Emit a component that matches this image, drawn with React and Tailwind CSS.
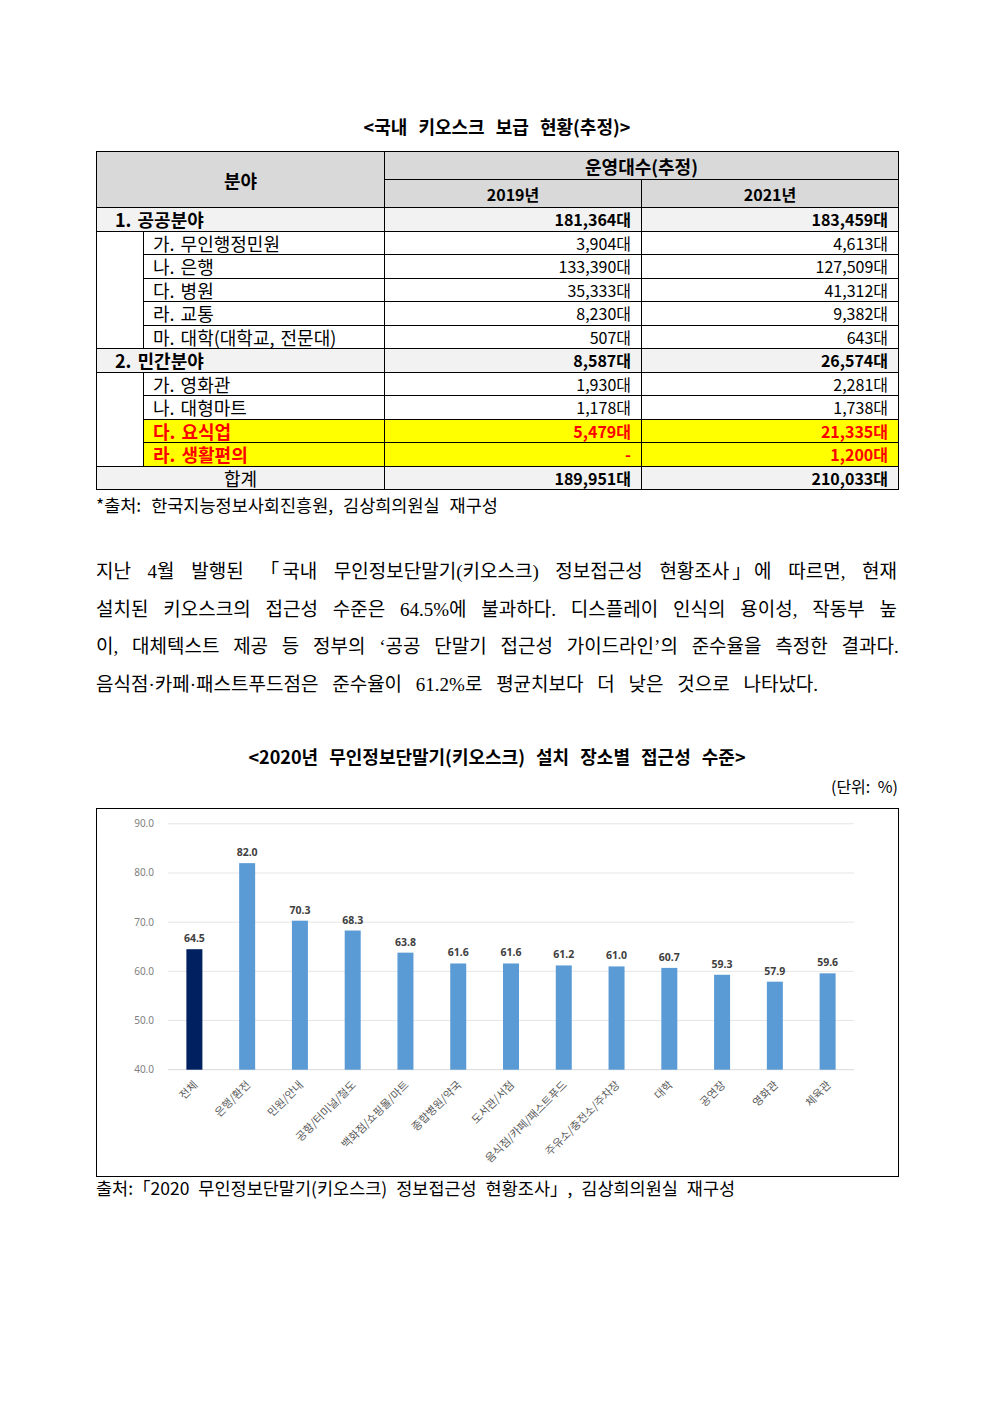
const sans = "font-['Noto_Sans_CJK_KR','Noto_Sans',sans-serif]";

const publicRows = [
  ["가. 무인행정민원", "3,904대", "4,613대"],
  ["나. 은행", "133,390대", "127,509대"],
  ["다. 병원", "35,333대", "41,312대"],
  ["라. 교통", "8,230대", "9,382대"],
  ["마. 대학(대학교, 전문대)", "507대", "643대"],
];

const privateRows = [
  ["가. 영화관", "1,930대", "2,281대"],
  ["나. 대형마트", "1,178대", "1,738대"],
  ["다. 요식업", "5,479대", "21,335대", true],
  ["라. 생활편의", "-", "1,200대", true],
];

const bars = [
  ["전체", 64.5, true],
  ["은행/환전", 82.0],
  ["민원/안내", 70.3],
  ["공항/터미널/철도", 68.3],
  ["백화점/쇼핑몰/마트", 63.8],
  ["종합병원/약국", 61.6],
  ["도서관/서점", 61.6],
  ["음식점/카페/패스트푸드", 61.2],
  ["주유소/충전소/주차장", 61.0],
  ["대학", 60.7],
  ["공연장", 59.3],
  ["영화관", 57.9],
  ["체육관", 59.6],
];

const td = "border border-black p-0 h-[23.5px] leading-none";

const SubRows = ({ rows }) =>
  rows.map(([label, a, b, hl], i) => (
    <tr key={label}>
      {i === 0 && <td rowSpan={rows.length} className="border border-black p-0" />}
      <td
        className={`${td} pl-[9px] text-[18px] [word-spacing:2px] ${hl ? "bg-[#ffff00] text-[#ff0000] font-bold" : ""}`}
      >
        {label}
      </td>
      <td
        className={`${td} pr-[10px] text-right text-[16px] ${hl ? "bg-[#ffff00] text-[#ff0000] font-bold" : ""}`}
      >
        {a}
      </td>
      <td
        className={`${td} pr-[10px] text-right text-[16px] ${hl ? "bg-[#ffff00] text-[#ff0000] font-bold" : ""}`}
      >
        {b}
      </td>
    </tr>
  ));

const GroupRow = ({ label, a, b, center }) => (
  <tr className="bg-[#f2f2f2]">
    <td
      colSpan={2}
      className={`${td} text-[18px] [word-spacing:2px] ${center ? "text-center" : "pl-[18px] font-bold"}`}
    >
      {label}
    </td>
    <td className={`${td} pr-[10px] text-right text-[16px] font-bold`}>{a}</td>
    <td className={`${td} pr-[10px] text-right text-[16px] font-bold`}>{b}</td>
  </tr>
);

const Chart = () => {
  const x0 = 71;
  const step = 52.77;
  const axisY = 260.7;
  const unit = 4.918;
  const yOf = (v) => axisY - (v - 40) * unit;
  const ticks = [90, 80, 70, 60, 50, 40];

  return (
    <svg width="801" height="367" className="block">
      {ticks.map((t) => (
        <g key={t}>
          <line
            x1={x0}
            x2={757}
            y1={yOf(t)}
            y2={yOf(t)}
            stroke={t === 40 ? "#d9d9d9" : "#e6e6e6"}
            strokeWidth="1"
          />
          <text
            x="57"
            y={yOf(t) + 3.5}
            textAnchor="end"
            fontSize="10"
            fill="#7f7f7f"
            fontFamily="'Noto Sans', sans-serif"
          >
            {t.toFixed(1)}
          </text>
        </g>
      ))}
      {bars.map(([name, v, dark], i) => {
        const cx = x0 + step * (i + 0.5);
        const top = yOf(v);
        return (
          <g key={name}>
            <rect
              x={cx - 8}
              y={top}
              width="16"
              height={axisY - top}
              fill={dark ? "#002060" : "#5b9bd5"}
            />
            <text
              x={cx}
              y={top - 7}
              textAnchor="middle"
              fontSize="10.5"
              fontWeight="bold"
              fill="#404040"
              fontFamily="'Noto Sans', sans-serif"
            >
              {v.toFixed(1)}
            </text>
            <text
              x={cx + 4}
              y={axisY + 16}
              textAnchor="end"
              fontSize="11"
              fill="#595959"
              fontFamily="'Noto Sans CJK KR', sans-serif"
              transform={`rotate(-45 ${cx + 4} ${axisY + 16})`}
            >
              {name}
            </text>
          </g>
        );
      })}
    </svg>
  );
};

const Line = ({ children, last }) => (
  <div
    className={`h-[37.7px] leading-[37.7px] whitespace-nowrap ${last ? "text-left" : "text-justify [text-align-last:justify]"}`}
  >
    {children}
  </div>
);

export default function App() {
  return (
    <div className={`min-h-[1403px] w-[992px] bg-white text-black ${sans}`}>
      <div className="ml-[96px] w-[802px] pt-[114px]">
        <div className="h-[24px] text-center text-[18px] font-bold leading-[24px] [word-spacing:7px]">
          &lt;국내 키오스크 보급 현황(추정)&gt;
        </div>

        <table className="mt-[13px] w-[802px] table-fixed border-collapse">
          <colgroup>
            <col className="w-[47px]" />
            <col className="w-[241px]" />
            <col className="w-[257px]" />
            <col className="w-[257px]" />
          </colgroup>
          <tbody>
            <tr className="bg-[#d9d9d9]">
              <td
                colSpan={2}
                rowSpan={2}
                className="border border-black p-0 text-center text-[18px] font-bold leading-none"
              >
                분야
              </td>
              <td
                colSpan={2}
                className="h-[28px] border border-black p-0 text-center text-[18px] font-bold leading-none"
              >
                운영대수(추정)
              </td>
            </tr>
            <tr className="bg-[#d9d9d9]">
              <td className="h-[28px] border border-black p-0 text-center text-[16px] font-bold leading-none">
                2019년
              </td>
              <td className="h-[28px] border border-black p-0 text-center text-[16px] font-bold leading-none">
                2021년
              </td>
            </tr>
            <GroupRow label="1. 공공분야" a="181,364대" b="183,459대" />
            <SubRows rows={publicRows} />
            <GroupRow label="2. 민간분야" a="8,587대" b="26,574대" />
            <SubRows rows={privateRows} />
            <GroupRow label="합계" a="189,951대" b="210,033대" center />
          </tbody>
        </table>

        <div className="mt-[5px] h-[20px] text-[17.5px] leading-[20px] [word-spacing:6px]">
          *출처: 한국지능정보사회진흥원, 김상희의원실 재구성
        </div>

        <div className="mt-[38px] w-[801px] font-['Liberation_Serif','Noto_Sans_CJK_KR',serif] text-[19px] [word-spacing:9px]">
          <Line>지난 4월 발행된 「국내 무인정보단말기(키오스크) 정보접근성 현황조사」에 따르면, 현재</Line>
          <Line>설치된 키오스크의 접근성 수준은 64.5%에 불과하다. 디스플레이 인식의 용이성, 작동부 높</Line>
          <Line>이, 대체텍스트 제공 등 정부의 ‘공공 단말기 접근성 가이드라인’의 준수율을 측정한 결과다.</Line>
          <Line last>음식점·카페·패스트푸드점은 준수율이 61.2%로 평균치보다 더 낮은 것으로 나타났다.</Line>
        </div>

        <div className="mt-[40px] h-[24px] text-center text-[18px] font-bold leading-[24px] [word-spacing:7px]">
          &lt;2020년 무인정보단말기(키오스크) 설치 장소별 접근성 수준&gt;
        </div>
        <div className="mt-[8px] h-[20px] text-right text-[16px] leading-[20px] [word-spacing:4px]">
          (단위: %)
        </div>

        <div className="mt-[12px] w-[803px] border border-black">
          <Chart />
        </div>

        <div className="mt-[1px] h-[20px] text-[17.5px] leading-[20px] [word-spacing:5px]">
          출처:「2020 무인정보단말기(키오스크) 정보접근성 현황조사」, 김상희의원실 재구성
        </div>
      </div>
    </div>
  );
}
